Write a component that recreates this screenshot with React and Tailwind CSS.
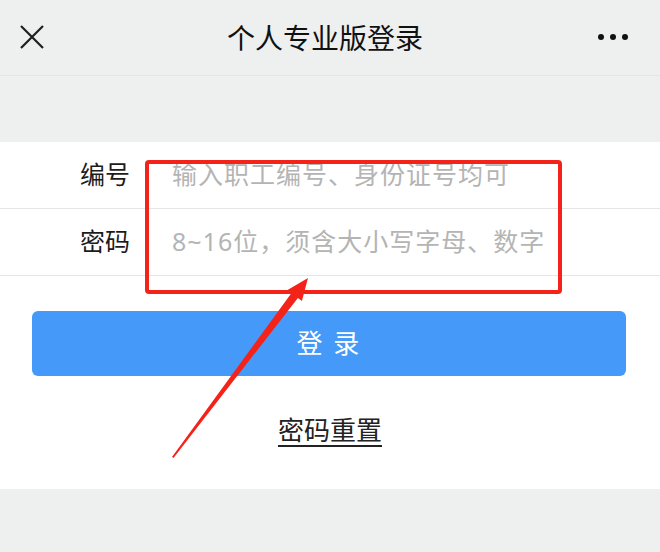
import { useState } from "react";

const Row = ({ label, placeholder }) => (
  <div className="flex items-center h-[67px] pl-[80px] border-b border-[#e6e6e6]">
    <span className="w-[92px] text-[25px] text-[#1c1c1c]">{label}</span>
    <span className="text-[25px] text-[#b4b4b4] tracking-[1px]">{placeholder}</span>
  </div>
);

const App = () => {
  const [pressed, setPressed] = useState(false);

  return (
    <div
      className="relative w-[660px] h-[552px] bg-[#eeefef] overflow-hidden"
      style={{ fontFamily: '"Noto Sans", "Noto Sans CJK SC", sans-serif' }}
    >
      {/* Top bar */}
      <div className="flex items-center justify-between h-[76px] px-[20px] border-b border-[#e4e6e6]">
        <svg width="24" height="24" viewBox="0 0 24 24" className="mt-[-2px]">
          <path d="M1 1 L23 23 M23 1 L1 23" stroke="#1f1f1f" strokeWidth="2.2" />
        </svg>
        <h1 className="text-[28px] text-[#111] ml-[8px]">个人专业版登录</h1>
        <div className="flex gap-[6px] mr-[12px] mt-[-2px]">
          <span className="w-[6px] h-[6px] rounded-full bg-[#111]" />
          <span className="w-[6px] h-[6px] rounded-full bg-[#111]" />
          <span className="w-[6px] h-[6px] rounded-full bg-[#111]" />
        </div>
      </div>

      <div className="h-[66px]" />

      {/* Form */}
      <div className="bg-white h-[347px] flex flex-col">
        <Row label="编号" placeholder="输入职工编号、身份证号均可" />
        <Row label="密码" placeholder="8~16位，须含大小写字母、数字" />

        <button
          onClick={() => setPressed(!pressed)}
          className="ml-[32px] mr-[34px] mt-[35px] h-[65px] rounded-[6px] bg-[#4599f8] text-white text-[26px] tracking-[2px]"
        >
          登 录
        </button>

        <div className="flex justify-center mt-[35px]">
          <a className="text-[26px] text-[#222] underline underline-offset-[5px] decoration-[2px]">密码重置</a>
        </div>
      </div>

      {/* Annotation */}
      <div className="absolute left-[145px] top-[160px] w-[417px] h-[134px] border-[4px] border-[#f4231a] rounded-[4px]" />
      <svg className="absolute left-0 top-0" width="660" height="552" viewBox="0 0 660 552">
        <polygon
          points="172,457 291.5,293.1 287.5,290.1 308,278 301.9,300.9 297.9,297.9 173.5,458"
          fill="#f4231a"
        />
      </svg>
    </div>
  );
};

export default App;
